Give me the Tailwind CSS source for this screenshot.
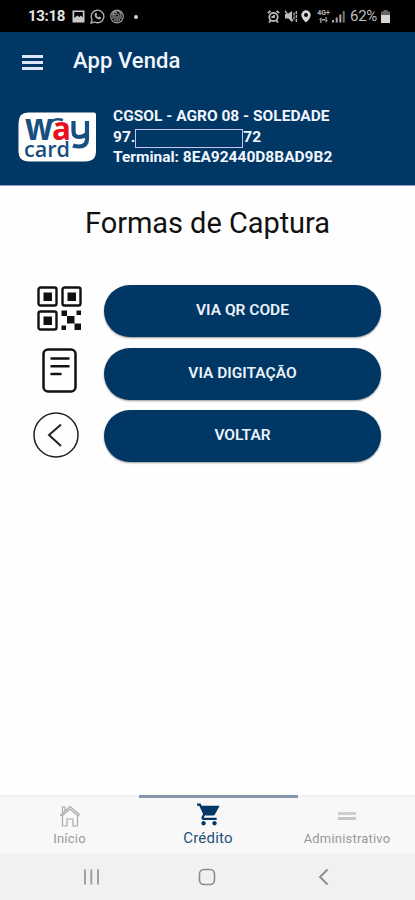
<!DOCTYPE html>
<html lang="pt-BR">
<head>
    <meta charset="UTF-8">
    <meta name="viewport" content="width=device-width, initial-scale=1.0">
    <title>App Venda</title>
    <script src="https://cdn.jsdelivr.net/npm/@tailwindcss/browser@4"></script>
</head>
<body class="h-screen flex flex-col overflow-hidden bg-[#fefefe] font-[Roboto,sans-serif]">
    <!-- Status bar -->
    <div class="h-8 shrink-0 bg-black flex items-center justify-between pl-7 pr-[25px] pt-px text-[#d6d6d6]">
        <div class="flex items-center">
            <span class="w-[38px] text-[15px] font-bold whitespace-nowrap tracking-[-0.3px] text-[#e4e4e4]">13:18</span>
            <svg class="ml-[6px] w-[13px] h-[13px]" viewBox="0 0 13 13"><path fill="#c9c9c9" fill-rule="evenodd" d="M.5 .5h12v12H.5zM2.300 2v6l3-2.500 2 1.500 1.500-1.500 2 2V2z"/></svg>
            <svg class="ml-[5px] w-[15px] h-[15px]" viewBox="0 0 15 15" fill="none" stroke="#aaa" stroke-width="1.400"><path d="M1 14l1-3.500A6.300 6.300 0 1 1 4.500 13z"/><path fill="#aaa" stroke="none" d="M5.200 4l1.200-.2.800 1.800-.6.800q.8 1.300 2 1.900l.8-.8 1.800.9q0 2-2.200 2Q4.500 9.500 4.500 5.500z"/></svg>
            <svg class="ml-[5px] w-[14px] h-[15px]" viewBox="0 0 14 15" fill="none" stroke="#999" stroke-width="1.200"><circle cx="7" cy="7.500" r="6.300"/><path d="M3 10V6a4 4 0 0 1 8 0v4M5 12V7a2 2 0 0 1 4 0v5M7 7v6M2 5h3M9 4h3M4 3l3 1"/></svg>
            <span class="ml-[10px] w-1 h-1 rounded-full bg-[#d6d6d6]"></span>
        </div>
        <div class="flex items-center">
            <svg class="w-[13px] h-[13px]" viewBox="0 0 13 13" fill="none" stroke="#bdbdbd" stroke-width="1.800"><circle cx="6.500" cy="7" r="4.200"/><path d="M.8 3L3.500.9M12.200 3L9.500.9M2 12.500l1.500-2M11 12.500l-1.500-2M4.500 7h2.500V5"/></svg>
            <svg class="ml-[4px] w-[14px] h-[13px]" viewBox="0 0 14 13" fill="#bdbdbd"><path d="M1 4h2.500L8 1v11L4.500 8.500H1z"/><path d="M1 1l8 10" stroke="#bdbdbd" stroke-width="1.300"/><path d="M10 2.500v8M12.300 1v11" stroke="#bdbdbd" stroke-width="1.300" stroke-dasharray="3 1"/></svg>
            <svg class="ml-[3px] w-[10px] h-[13px]" viewBox="0 0 10 13"><path fill="#d6d6d6" fill-rule="evenodd" d="M5 .3a4.700 4.700 0 0 1 4.700 4.700Q9.700 8 5 12.600.3 8 .3 5A4.700 4.700 0 0 1 5 .3zM5 3a2 2 0 1 0 0 4 2 2 0 0 0 0-4z"/></svg>
            <div class="ml-[6px] w-[13px] flex flex-col items-center text-[7px] leading-[7px] font-bold text-[#b5b5b5]">
                <span>4G+</span>
                <svg class="w-[9px] h-[6px]" viewBox="0 0 9 6" fill="#aaa"><path d="M0 3l2.500-3v6H1.300V3zM9 3L6.500 6V0h1.200v3zM3 2h3v1.500H3z"/></svg>
            </div>
            <svg class="ml-[2px] w-[13px] h-[13px]" viewBox="0 0 13 13" fill="#aaa"><path d="M0 10h2v2.500H0zM3.700 7.500h2v5h-2zM7.300 4.500h2v8h-2z"/><path fill="#777" d="M10.700 1h2v11.500h-2z"/></svg>
            <span class="ml-[5px] w-[27px] text-[15px] whitespace-nowrap text-[#bdbdbd] tracking-[-0.3px]">62%</span>
            <svg class="ml-[4px] w-[9px] h-[13px]" viewBox="0 0 9 13"><path fill="#666" d="M2.500 0h4v1.500H9V6H0V1.500h2.500z"/><path fill="#d6d6d6" d="M0 5h9v8H0z"/></svg>
        </div>
    </div>

    <!-- Header -->
    <header class="h-[154px] shrink-0 bg-[#003764] border-b border-[#8d9cc0] text-[#f2f6ff]">
        <div class="h-[58px] flex items-center pl-[22px]">
            <div class="w-[21px] flex flex-col gap-[3px] pt-[2px]">
                <span class="h-[3px] bg-[#dfe5f7]"></span>
                <span class="h-[3px] bg-[#dfe5f7]"></span>
                <span class="h-[3px] bg-[#dfe5f7]"></span>
            </div>
            <h1 class="ml-[30px] -mt-px text-[22px] font-medium tracking-[0.1px]">App Venda</h1>
        </div>
        <div class="flex pl-[18px] pt-[16px]">
            <svg class="mt-[6px] w-[78px] h-[50px] shrink-0 overflow-visible" viewBox="0 0 78 50">
                <path fill="#fff" d="M10 .5H76q2 0 2 2V39q0 10.500-11 10.500H11Q.5 49.500.5 39V11Q.5 .5 10 .5z"/>
                <g font-family="Open Sans" font-weight="700" fill="#174f80">
                    <text x="7" y="27.500" font-size="37" textLength="28" lengthAdjust="spacingAndGlyphs">w</text>
                    <path d="M31 13Q35 5 45 8" fill="none" stroke="#174f80" stroke-width="2.500"/>
                    <text x="34" y="27.500" font-size="33" fill="#e90f1d" textLength="19" lengthAdjust="spacingAndGlyphs">a</text>
                    <path d="M55.500 9v10q0 6 5.500 6 5 0 8-3.500M69 9v18q0 7.500-8 7.500-3.500 0-6-1" fill="none" stroke="#174f80" stroke-width="4.200"/>
                    <text x="6" y="44.500" font-size="21" font-weight="600" textLength="46" lengthAdjust="spacingAndGlyphs">card</text>
                </g>
            </svg>
            <div class="ml-[17px] text-[15.500px] leading-5 font-bold whitespace-nowrap">
                <p>CGSOL - AGRO 08 - SOLEDADE</p>
                <p class="h-[21px] flex items-center">97.<span class="w-[108px] h-[19px] mt-[3px] border border-[#c9c3ee]"></span>72</p>
                <p>Terminal: 8EA92440D8BAD9B2</p>
            </div>
        </div>
    </header>

    <!-- Capture options -->
    <main class="flex-1">
        <h2 class="mt-[19px] text-center text-[29px] leading-9 tracking-[-0.05px] text-[#111]">Formas de Captura</h2>
        <div class="mt-[44px] pl-[33px] pr-[34px] flex flex-col gap-[10.500px]">
            <div class="flex items-center">
                <svg class="ml-[4px] w-[45px] h-[45px] -mt-[6px]" viewBox="0 0 45 45">
                    <g fill="none" stroke="#111" stroke-width="2.400"><rect x="1.500" y="1.500" width="18" height="18" rx="2"/><rect x="25.500" y="1.500" width="18" height="18" rx="2"/><rect x="1.500" y="25.500" width="18" height="18" rx="2"/></g>
                    <path fill="#111" d="M6.500 6.500h8.500v8.500H6.500zM30.500 6.500h8.500v8.500H30.500zM6.500 30.500h8.500v8.500H6.500zM24.500 24.500h5.500v5.500h-5.500zM39.500 24.500H44v4.500h-4.500zM30 30h7.500v7.500H30zM24.500 39.500H29V44h-4.500zM37.500 37.500H44V44h-6.500z"/>
                </svg>
                <button class="ml-auto w-[277px] h-[52px] rounded-full bg-[#003764] text-[#eaf2fb] text-[15.500px] font-semibold shadow-[0_1px_2px_#0006]">VIA QR CODE</button>
            </div>
            <div class="flex items-center">
                <svg class="ml-[9px] w-[35px] h-[45px] -mt-[7px]" viewBox="0 0 35 45" fill="none" stroke="#111" stroke-width="2.500" stroke-linecap="round"><rect x="1.500" y="1.500" width="32" height="42" rx="4.500"/><path d="M9.500 10.500h17M9.500 18.300h17M9.500 26h9"/></svg>
                <button class="ml-auto w-[277px] h-[52px] rounded-full bg-[#003764] text-[#eaf2fb] text-[15.500px] font-semibold shadow-[0_1px_2px_#0006]">VIA DIGITAÇÃO</button>
            </div>
            <div class="flex items-center">
                <svg class="w-[46px] h-[46px] -mt-[2px]" viewBox="0 0 46 46" fill="none" stroke="#222"><circle cx="23" cy="23" r="22" stroke-width="1.500"/><path d="M28 12.500L16 23l12 11" stroke-width="2"/></svg>
                <button class="ml-auto w-[277px] h-[52px] rounded-full bg-[#003764] text-[#eaf2fb] text-[15.500px] font-semibold shadow-[0_1px_2px_#0006]">VOLTAR</button>
            </div>
        </div>
    </main>

    <!-- Tab bar -->
    <nav class="h-[58px] shrink-0 grid grid-cols-[139px_159px_117px] bg-[#f8f8f8] text-[13px] leading-4 text-[#999]">
        <a class="border-t-2 border-[#f2f2f2] flex flex-col items-center pt-[8px]">
            <svg class="w-5 h-[22px]" viewBox="0 0 20 22" fill="none" stroke="#aaa" stroke-width="1.200"><path d="M.7 10L10 1.500l9.300 8-1.300 1.500L10 4l-8 7zM2.500 8.500V2H5v3.500M2.500 11v10H7v-7h6v7h4.500V10.500"/></svg>
            <span class="mt-[4px] tracking-[0.2px]">Início</span>
        </a>
        <a class="border-t-3 border-[#8497ad] flex flex-col items-center pt-[5px] pr-[21px] text-[#24507c]">
            <svg class="w-[23px] h-[23px]" viewBox="1 2 21 20" fill="#003764"><path d="M7 18c-1.100 0-1.990.9-1.990 2S5.900 22 7 22s2-.9 2-2-.9-2-2-2zM1 2v2h2l3.600 7.590-1.350 2.450C4.520 15.370 5.480 17 7 17h12v-2H7.420c-.14 0-.25-.11-.25-.25l.93-1.750h7.450c.75 0 1.410-.41 1.750-1.030L21.700 4H5.210l-.94-2H1zm16 16c-1.100 0-1.990.9-1.990 2s.89 2 1.990 2 2-.9 2-2-.9-2-2-2z"/></svg>
            <span class="mt-[4px] text-[15px] tracking-[0.2px]">Crédito</span>
        </a>
        <a class="border-t-2 border-[#f2f2f2] flex flex-col items-center pt-[15px] pr-[19px]">
            <span class="w-[18px] h-[3px] bg-[#cfcfcf]"></span>
            <span class="w-[18px] h-[3px] mt-[2px] bg-[#c6c6c6]"></span>
            <span class="mt-[11px] tracking-[0.2px]">Administrativo</span>
        </a>
    </nav>

    <!-- Android navigation -->
    <div class="h-[47px] shrink-0 bg-[#f1f1f1] flex items-start pt-[15px] pl-[83px]">
        <svg class="w-[17px] h-[18px]" viewBox="0 0 17 18" stroke="#a0a0a0" stroke-width="2"><path d="M2 1.500v15M8.300 1.500v15M15 1.500v15"/></svg>
        <svg class="ml-[98px] w-[18px] h-[18px]" viewBox="0 0 18 18" fill="none" stroke="#8c8c8c" stroke-width="1.600"><rect x="1.500" y="1.500" width="15" height="15" rx="4.500"/></svg>
        <svg class="ml-[102px] w-[12px] h-[18px]" viewBox="0 0 12 18" fill="none" stroke="#8c8c8c" stroke-width="1.800"><path d="M9.500 1.500L2 9l7.500 7.500"/></svg>
    </div>
</body>
</html>
